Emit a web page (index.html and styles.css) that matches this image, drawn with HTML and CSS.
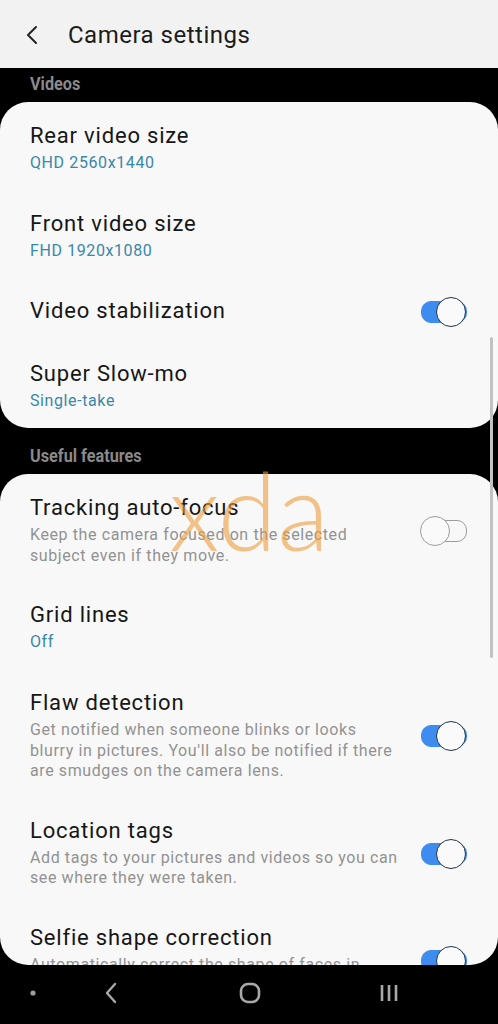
FILE: index.html
```html
<!DOCTYPE html>
<html lang="en">
<head>
<meta charset="utf-8">
<title>Camera settings</title>
<link rel="stylesheet" href="styles.css">
</head>
<body>
<header class="appbar">
  <svg class="back" width="14" height="20" viewBox="0 0 14 20"><path d="M11 2 L3 10 L11 18" fill="none" stroke="#222" stroke-width="2" stroke-linecap="round" stroke-linejoin="round"/></svg>
  <h1 class="title">Camera settings</h1>
</header>
<main class="content">
  <div class="section-label first"><span class="label-text">Videos</span></div>
  <section class="card">
    <div class="row">
      <div class="text"><div class="row-title">Rear video size</div><div class="row-sub">QHD 2560x1440</div></div>
    </div>
    <div class="row">
      <div class="text"><div class="row-title">Front video size</div><div class="row-sub">FHD 1920x1080</div></div>
    </div>
    <div class="row single">
      <div class="text"><div class="row-title">Video stabilization</div></div>
      <span class="toggle on"></span>
    </div>
    <div class="row">
      <div class="text"><div class="row-title">Super Slow-mo</div><div class="row-sub">Single-take</div></div>
    </div>
  </section>
  <div class="section-label"><span class="label-text">Useful features</span></div>
  <section class="card">
    <div class="row desc-row">
      <div class="text"><div class="row-title">Tracking auto-focus</div><div class="row-desc">Keep the camera focused on the selected subject even if they move.</div></div>
      <span class="toggle"></span>
    </div>
    <div class="row">
      <div class="text"><div class="row-title">Grid lines</div><div class="row-sub">Off</div></div>
    </div>
    <div class="row desc-row">
      <div class="text"><div class="row-title">Flaw detection</div><div class="row-desc">Get notified when someone blinks or looks blurry in pictures. You'll also be notified if there are smudges on the camera lens.</div></div>
      <span class="toggle on"></span>
    </div>
    <div class="row desc-row">
      <div class="text"><div class="row-title">Location tags</div><div class="row-desc">Add tags to your pictures and videos so you can see where they were taken.</div></div>
      <span class="toggle on"></span>
    </div>
    <div class="row desc-row">
      <div class="text"><div class="row-title">Selfie shape correction</div><div class="row-desc">Automatically correct the shape of faces in selfies.</div></div>
      <span class="toggle on"></span>
    </div>
  </section>
  <div class="scrollbar"></div>
</main>
<div class="watermark">xda</div>
<nav class="navbar">
  <svg class="nav-dot" width="8" height="8" viewBox="0 0 8 8"><circle cx="4" cy="4" r="2.6" fill="#9e9e9e"/></svg>
  <svg class="nav-back" width="14" height="22" viewBox="0 0 14 22"><path d="M11 2 L3 11 L11 20" fill="none" stroke="#a8a8a8" stroke-width="2.4" stroke-linecap="round" stroke-linejoin="round"/></svg>
  <svg class="nav-home" width="22" height="22" viewBox="0 0 22 22"><rect x="2" y="2" width="18" height="18" rx="7" fill="none" stroke="#a8a8a8" stroke-width="2.6"/></svg>
  <svg class="nav-recent" width="20" height="20" viewBox="0 0 20 20"><path d="M3 2 V18 M10 2 V18 M17 2 V18" stroke="#a8a8a8" stroke-width="2.6"/></svg>
</nav>
</body>
</html>
```

FILE: styles.css
```css
* { box-sizing: border-box; }
html, body { margin: 0; padding: 0; }
body {
  width: 498px;
  height: 1024px;
  overflow: hidden;
  background: #000;
  font-family: Roboto, "Noto Sans", "Liberation Sans", sans-serif;
  display: flex;
  flex-direction: column;
  position: relative;
}
.appbar {
  height: 68px;
  flex: 0 0 68px;
  background: #f2f2f2;
  display: flex;
  align-items: center;
  padding-left: 25px;
  padding-top: 1px;
}
.back { display: block; }
.title {
  margin: 0 0 0 29px;
  font-size: 24px;
  font-weight: 400;
  color: #1c1c1c;
  letter-spacing: 0.5px;
}
.content {
  flex: 1 1 auto;
  position: relative;
  overflow: hidden;
  border-radius: 0 0 28px 28px;
}
.section-label {
  padding: 17px 30px 7px;
  line-height: 22px;
  height: 46px;
}
.section-label.first { padding-top: 5px; height: 34px; }
.label-text {
  display: inline-block;
  font-size: 19px;
  font-weight: 700;
  color: #8a8a8a;
  transform: scaleX(0.855);
  transform-origin: left center;
  white-space: nowrap;
}
.card {
  background: #f8f8f8;
  border-radius: 28px;
}
.row {
  display: flex;
  align-items: center;
  padding: 20px 32px 17px 30px;
}
.row.single { padding: 19px 32px 15px 30px; }
.row.desc-row { padding: 20px 32px 15px 30px; }
.text { flex: 1 1 auto; min-width: 0; }
.row-title {
  font-size: 22px;
  line-height: 28px;
  color: #161616;
  letter-spacing: 0.8px;
}
.row-sub {
  margin-top: 3px;
  font-size: 16px;
  line-height: 20px;
  color: #3a87a8;
  letter-spacing: 0.6px;
}
.row-desc {
  margin-top: 3px;
  font-size: 16px;
  line-height: 20.5px;
  color: #929292;
  letter-spacing: 0.6px;
}
.toggle {
  flex: 0 0 46px;
  width: 46px;
  height: 28px;
  margin-left: 18px;
  position: relative;
}
.toggle::before {
  content: "";
  position: absolute;
  left: 1px;
  top: 4px;
  width: 44px;
  height: 20px;
  border-radius: 10px;
  border: 1.5px solid #9c9c9c;
}
.toggle::after {
  content: "";
  position: absolute;
  left: 0;
  top: 0;
  width: 28px;
  height: 28px;
  border-radius: 50%;
  background: #fafafa;
  border: 1.5px solid #9c9c9c;
}
.toggle.on::before {
  background: #3e8cf0;
  border-color: #3e8cf0;
}
.toggle.on::after {
  left: auto;
  right: 0;
  border-color: #20344c;
}
.scrollbar {
  position: absolute;
  right: 5px;
  top: 269px;
  width: 3px;
  height: 321px;
  border-radius: 2px;
  background: #c2c2c2;
}
.watermark {
  position: absolute;
  left: 169px;
  top: 454px;
  font-family: Lato, "Open Sans", sans-serif;
  font-weight: 300;
  font-size: 108px;
  line-height: 110px;
  color: rgba(238, 156, 60, 0.6);
  pointer-events: none;
}
.navbar {
  flex: 0 0 59px;
  height: 59px;
  display: flex;
  align-items: center;
  padding-bottom: 4px;
  position: relative;
}
.navbar svg { display: block; }
.nav-dot { margin-left: 29px; }
.nav-back { margin-left: 67px; }
.nav-home { margin-left: 121px; }
.nav-recent { margin-left: 118px; }
```
